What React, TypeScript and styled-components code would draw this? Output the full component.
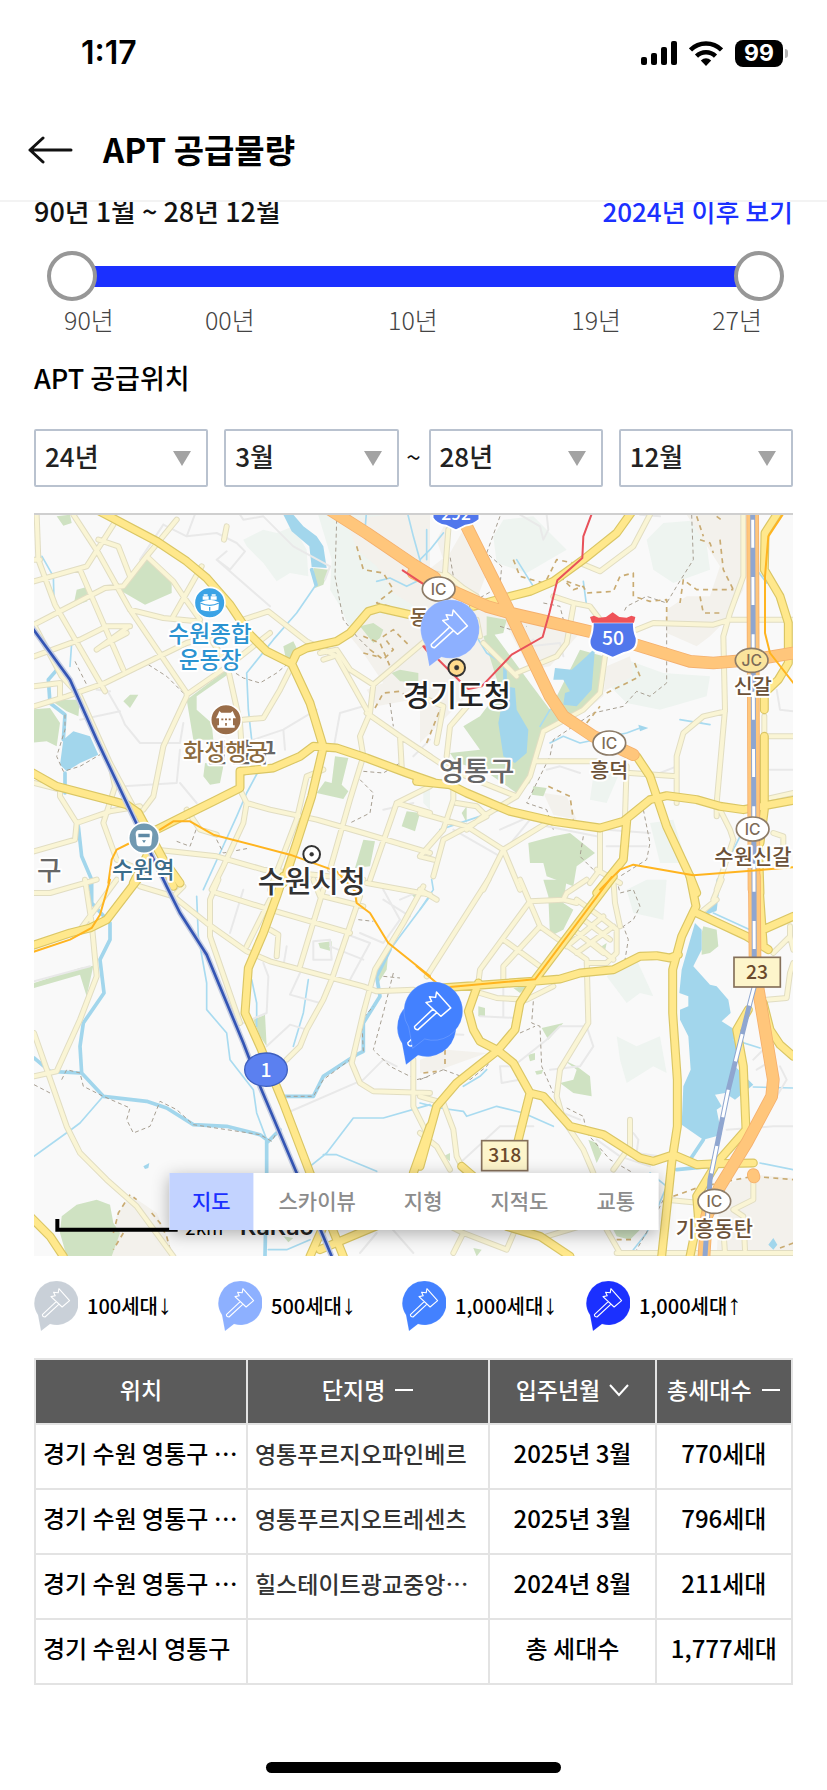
import React, { useState } from "react";
import styled, { createGlobalStyle } from "styled-components";

const GlobalStyle = createGlobalStyle`
  *, *::before, *::after { box-sizing: border-box; }
  body {
    margin: 0;
    background: #fff;
    color: #111;
    font-family: "Noto Sans CJK KR", sans-serif;
  }
  button, select, input { font-family: inherit; }
`;

const BLUE = "#1b30ff";

/* ---------- screen frame ---------- */

const Screen = styled.div`
  min-height: 100vh;
  display: flex;
  flex-direction: column;
  background: #fff;
`;

const StatusBar = styled.div`
  height: 104px;
  display: flex;
  align-items: center;
  justify-content: space-between;
  padding: 2px 38px 0 81px;
`;

const Clock = styled.time`
  font: 600 32px/32px Inter, sans-serif;
  color: #000;
`;

const StatusIcons = styled.div`
  display: flex;
  align-items: center;
  gap: 12px;
`;

const Battery = styled.div`
  position: relative;
  width: 48px;
  height: 27px;
  margin-right: 6px;
  border-radius: 8px;
  background: #000;
  color: #fff;
  text-align: center;
  font: 700 23px/27px Inter, sans-serif;

  &::after {
    content: "";
    position: absolute;
    left: 50px;
    top: 9px;
    width: 3px;
    height: 9px;
    border-radius: 0 4px 4px 0;
    background: #b5b5b5;
  }
`;

const Header = styled.header`
  position: relative;
  z-index: 1;
  height: 98px;
  display: flex;
  align-items: center;
  gap: 30px;
  padding: 0 28px 4px;
  background: #fff;
  border-bottom: 2px solid #f3f3f3;
`;

const BackButton = styled.button`
  display: flex;
  padding: 0;
  border: 0;
  background: none;
  cursor: pointer;
`;

const Title = styled.h1`
  margin: 0;
  padding-bottom: 2px;
  font-size: 33px;
  line-height: 40px;
  font-weight: 700;
  color: #000;
`;

const Body = styled.main`
  flex: 1;
  padding: 0 34px;
`;

const HomeBar = styled.div`
  width: 295px;
  height: 11px;
  margin: 0 auto 17px;
  border-radius: 6px;
  background: #000;
`;

/* ---------- period slider ---------- */

const PeriodRow = styled.div`
  display: flex;
  justify-content: space-between;
  align-items: center;
  margin-top: -11px;
  height: 40px;
  font-size: 27px;
  line-height: 40px;
  font-weight: 500;
`;

const PeriodLink = styled.a`
  color: ${BLUE};
  font-size: 26px;
  text-decoration: none;
`;

const RangeBox = styled.div`
  display: grid;
  align-items: center;
  height: 50px;
  margin: 20px 9px 0 13px;
  background: linear-gradient(${BLUE}, ${BLUE}) center / calc(100% - 50px) 21px no-repeat;
`;

const Range = styled.input`
  grid-area: 1 / 1;
  appearance: none;
  width: 100%;
  height: 50px;
  margin: 0;
  background: none;
  pointer-events: none;

  &::-webkit-slider-thumb {
    appearance: none;
    width: 50px;
    height: 50px;
    border: 4px solid #979797;
    border-radius: 50%;
    background: #fff;
    pointer-events: auto;
  }
`;

const Ticks = styled.div`
  display: grid;
  grid-template-columns: 10fr 13fr 13fr 10fr auto;
  padding: 0 31px 0 30px;
  margin-top: 2px;
  font-size: 25px;
  line-height: 32px;
  font-weight: 300;
  color: #444;
`;

/* ---------- location filters ---------- */

const SectionTitle = styled.h2`
  margin: 25px 0 0;
  font-size: 27px;
  line-height: 36px;
  font-weight: 500;
  color: #000;
`;

const Filters = styled.form`
  display: grid;
  grid-template-columns: 174fr 190fr auto 174fr 190fr;
  margin: 33px 0 26px;
`;

const SelectBox = styled.div<{ $spaced?: boolean }>`
  position: relative;
  margin-left: ${(p) => (p.$spaced ? "16px" : "0")};

  &::after {
    content: "";
    position: absolute;
    right: 17px;
    top: 22px;
    border: 9px solid transparent;
    border-top: 15px solid #a3a3a3;
    border-bottom: 0;
    pointer-events: none;
  }
`;

const Select = styled.select`
  appearance: none;
  width: 100%;
  height: 58px;
  padding: 0 9px 5px;
  border: 2px solid #b9c2cf;
  border-radius: 2px;
  background: #fff;
  color: #222;
  font-size: 26px;
  font-weight: 500;
`;

const Tilde = styled.span`
  width: 30px;
  text-align: center;
  font-size: 26px;
  line-height: 54px;
`;

/* ---------- map ---------- */

const MapFrame = styled.section`
  position: relative;
  overflow: hidden;
  border-top: 2px solid #cfcfcf;
`;

const MapSvg = styled.svg`
  display: block;
  width: 100%;
  height: auto;
`;

const MapTabs = styled.div`
  position: absolute;
  left: 50%;
  bottom: 26px;
  transform: translateX(-50%);
  display: flex;
  gap: 2px;
  background: #fff;
  box-shadow: 0 4px 16px rgba(0, 0, 0, 0.3);
`;

const MapTab = styled.button<{ $active: boolean }>`
  height: 57px;
  padding: 0 23px 3px;
  border: 0;
  white-space: nowrap;
  font-size: 21px;
  font-weight: 500;
  cursor: pointer;
  background: ${(p) => (p.$active ? "#c3d3ff" : "#fff")};
  color: ${(p) => (p.$active ? BLUE : "#8c8c8c")};
`;

/* ---------- legend ---------- */

const Legend = styled.ul`
  display: grid;
  grid-template-columns: repeat(3, 184px) auto;
  list-style: none;
  margin: 25px 0 27px;
  padding: 0;
`;

const LegendItem = styled.li`
  display: flex;
  align-items: center;
  gap: 9px;
  font-size: 20px;
  line-height: 50px;
  font-weight: 500;
  color: #000;
  white-space: nowrap;
`;

const Arrow = styled.span`
  font-family: "Liberation Sans", sans-serif;
  font-size: 28px;
  line-height: 20px;
`;

/* ---------- table ---------- */

const Table = styled.table`
  width: 100%;
  table-layout: fixed;
  border-collapse: collapse;
  color: #000;
  font-size: 23px;
  line-height: 32px;
`;

const Th = styled.th<{ $w: number }>`
  width: ${(p) => p.$w}%;
  height: 65px;
  padding: 0 0 4px;
  border: 2px solid #e3e3e3;
  background: #5b5b5b;
  color: #fff;
  font-weight: 500;
  white-space: nowrap;
`;

const SortButton = styled.button`
  display: inline-flex;
  align-items: center;
  gap: 9px;
  padding: 0;
  border: 0;
  background: none;
  color: inherit;
  font-size: 23px;
  line-height: 32px;
  font-weight: 500;
`;

const Td = styled.td<{ $align?: "left" | "center"; $name?: boolean }>`
  height: 65px;
  padding: 0 7px 6px;
  border: 2px solid #e3e3e3;
  text-align: ${(p) => p.$align ?? "center"};
  color: ${(p) => (p.$name ? "#333" : "#000")};
  font-size: ${(p) => (p.$name ? "23px" : "24px")};
  font-weight: 500;
  white-space: nowrap;
  overflow: hidden;
`;

/* ---------- map data: four tiles, each drawn in its own coordinates ---------- */

interface Tile {
  x: number;
  y: number;
  hills: string;
  urban: string;
  parks: string;
  water: string;
  streams: string;
  rivers: string;
  lanes: string;
  trails: string;
  tracks: string;
  minor: string;
  major: string;
  express: string;
  metro: string;
  red: string;
}

const TILES: Tile[] = [
  {
    x: 0,
    y: 0,
    hills:
      "M640 90L700 60 740 70 790 50 830 120 835 200 780 190 740 215 700 160 650 110ZM860 0L1200 0 1200 300 960 360 930 290 900 240 905 150ZM1180 830L1200 840 1200 900 1180 880Z",
    urban:
      "M950 30L1200 0 1200 560 1040 590 1010 540 1060 520 1000 430 960 380 1010 310 1150 320 1170 300 1090 250 1040 170 980 120Z",
    parks:
      "M80 20L120 15 125 40 100 48ZM350 150L425 205 425 250 345 285 275 245 280 220ZM140 240L170 232 172 275 130 290ZM470 570L590 480 600 490 500 560 500 600 545 640 550 690 490 690ZM0 600L60 595 90 640 80 710 50 695 0 700ZM60 570L150 570 145 620 110 605ZM280 575L300 555 325 555 300 595ZM525 760L580 770 570 820 540 825 520 800ZM915 740L955 745 935 825 955 845 940 868 860 850 885 815 905 820ZM760 410L790 395 800 415 770 460ZM1130 905L1170 910 1155 965 1115 950ZM1000 990L1035 995 1020 1070 975 1075ZM990 350L1030 340 1060 360 1050 385 1030 400ZM1085 490L1110 480 1165 490 1165 520 1110 515ZM850 175L895 180 880 225 855 235Z",
    water:
      "M760 15L790 15 820 50 860 80 880 110 890 175 845 172 838 110 785 65ZM100 690L130 665 180 680 205 735 150 760 110 785 90 765Z",
    streams:
      "M36 140L70 200 72 270M125 400L120 470M855 230L800 310 730 390 650 490 655 600 665 690M682 790L650 850 620 920 570 1030 520 1140M1010 0L1005 60M1130 0L1150 80 1175 170M1190 60L1190 150M1170 210L1130 230 1080 205 1040 215",
    rivers: "M90 470L55 510 60 580 105 615 100 690M105 790L105 850M145 950L155 1040 185 1110 180 1140M845 180L858 225",
    lanes:
      "M400 45L470 80 560 70 620 100 645 125 600 180 560 150 590 125M400 45L330 150M560 150L720 290M470 80L500 0M620 0L640 30 700 20 790 110 900 170 885 210M230 540L270 610 285 645 330 700 450 700 460 640M280 830L440 820 450 720M450 820L500 880M640 700L760 660 860 600M760 660L765 720M910 720L930 610 1000 590M1200 690L1150 740M1060 900L1150 880M1110 1010L1200 1030M200 540L240 545 M150 630 L270 605",
    trails:
      "M920 30L915 200 940 330 980 380 1020 420M355 465L410 500 465 555M600 480L640 505 690 520 740 490 770 465M135 455L170 525M105 615L105 660 80 740 100 785 150 770 210 735M440 995L480 1010 500 955M560 990L580 1030 660 1015M990 810L1030 850 1020 910 960 940M1000 785L1060 790 1110 760M1080 580L1090 650",
    tracks:
      "M980 110L1000 180 1060 190 1090 240 1040 280 1080 290M1020 420L1060 450 1090 420 1060 380 1090 360 1140 410M1000 380L1050 400 1080 470 1110 470M1035 595L1060 550 1110 545 1130 560M1000 430L1040 440",
    minor:
      "M20 15L25 150 75 285 225 545M12 345L225 235 280 230 350 140 440 30M130 15L205 130 300 300 470 550M12 215L170 170 250 45M150 180L280 480M205 90L265 110 300 200M350 140L430 215 460 260 510 330M430 320L515 170M300 300L400 325 500 335M12 440L150 390 230 350 300 350M12 150L30 150M12 590L110 560 225 520 470 400 540 380M12 345L95 500 150 560 240 760 320 910M90 560L90 520 12 530M200 420L290 355M215 410L290 370M470 560L400 710 370 860 340 900M470 555L600 465 720 370M510 340L590 460 630 640 640 790M640 330L715 305 830 395 920 440 1010 600M640 630L700 625 750 540 785 470M870 430L920 420 960 480 1030 525 1190 390M1030 525L1020 610 990 680 1000 740 960 870 900 1080M1010 610L1110 680 1200 740M1110 680L1115 770M910 440L880 450M12 820L90 840 90 860 140 940 240 905 330 890M140 940L135 990 12 1025M240 760L255 830 220 940 260 1050 330 1080M470 900L510 960 560 975M630 840L650 880 720 900 860 930 1000 970 1200 1030M650 880L640 940 580 1070 545 1140M720 1140L800 930 830 800 880 780M1100 880L1200 830M1100 880L1020 1110M380 1020L560 1040 700 1080 1000 1110M1100 880L1200 910M590 50L582 90",
    major:
      "M200 0L380 95 470 155 530 205 600 285 660 375 710 425 785 462 840 580 880 712 845 860 800 1000 760 1120M785 462L800 430 830 415 920 395 960 370 1015 305 1050 295 1170 322M880 712L850 710 810 740 730 775 630 785 630 835 560 870 460 920 330 985M880 712L920 715 1010 745 1130 790 1210 818M0 785L80 830 290 885 325 910 400 1050 450 1120M350 1040L310 1120",
    express: "M900 0L1010 70 1150 165 1215 205",
    metro: "M390 960L430 935 480 935 550 975 780 1035 920 1085 980 1150M235 1120L245 1050 260 1020 300 1000",
    red: "M1118 182L1200 236M1180 410L1200 435",
  },
  {
    x: 1170,
    y: 0,
    hills:
      "M220 80L250 30 340 20 440 120 320 190 230 160ZM680 90L730 40 850 30 870 180 760 220 700 180ZM540 500L620 450 730 490 870 500 860 560 720 600 620 580ZM520 800L620 740 560 880 510 870ZM690 940L760 930 800 1060 720 1060Z",
    urban:
      "M0 200L90 130 130 60 200 190 170 270 260 300 380 350 480 370 390 470 330 480 250 330 200 420 240 500 160 540 0 700ZM90 15L50 90 80 180ZM800 15L975 15 970 240 920 330 870 380 830 410 740 370 740 300 800 260 870 260 900 170ZM500 600L560 540 640 500 630 440 560 470 550 560ZM370 850L440 860 470 930 400 915Z",
    parks:
      "M200 320L260 330 250 370 200 380ZM190 380L220 370 330 520 390 600 480 420 550 440 540 540 490 600 370 660 330 820 290 850 190 780 110 760 90 730 180 720 130 650 180 620 240 540ZM325 1000L400 980 450 970 525 1030 470 1070 460 1130 380 1100 370 1060 330 1060ZM340 830L380 835 370 860 335 855ZM125 910L140 890 140 940Z",
    water:
      "M455 480L500 440 525 415 515 540 470 590 430 585 435 550 450 545 430 510 400 510 405 475ZM255 530L285 535 290 600 325 660 320 730 285 760 250 740 235 640ZM655 645L685 655 660 665ZM830 635L870 645 840 640Z",
    streams:
      "M0 150L30 120 70 70M490 215L500 290 540 320M290 150L340 230M175 390L200 430 260 470M390 600L360 650M390 700L430 680 480 700 620 670 660 655M780 630L870 645M310 840L240 900 60 960M1010 180L1040 220M930 1040L960 980",
    rivers: "M255 475L255 530",
    lanes:
      "M300 15L360 50 370 90 385 60 380 15M660 15L720 20M330 410L420 400 430 440M300 420L340 390M240 960L330 920M380 780L420 770 480 790M560 960L690 970M560 1010L680 1010M380 950L530 980M100 960L240 1040M240 1040L330 930M1070 540L1080 600 1120 605M1050 780L1120 780M720 790L770 770",
    trails:
      "M240 20L200 130 245 170 240 230 170 270 100 200 90 140M815 15L820 150 770 230 740 280 680 260 620 290 610 310M740 350L740 520 690 560 650 545 610 590 520 610 400 690 390 740 320 880 380 900 400 960M670 900L690 1000 680 1050 600 1100M240 350L290 365 320 350M370 280L420 290 430 330M490 980L480 1040 520 1080",
    tracks:
      "M280 150L300 200 370 220M380 210L410 150 460 160M420 200L460 240 490 230 500 250 580 245 600 200 640 190 640 260 690 275 740 270 740 340M780 280L790 210 830 240 900 240 940 240M840 260L850 310 900 310M840 90L870 100 880 130M900 90L910 180 940 240M830 20L850 80M560 550L600 530 660 500 640 450M500 640L540 590M385 830L450 860 460 930M890 20L910 35M20 700L60 600M480 230L440 215",
    minor:
      "M85 60L75 190M75 190L130 235 170 260M0 180L80 200M480 160L540 185 640 110 690 15M400 260L460 280 510 290 540 330M460 290L440 400 410 440 290 490M190 400L240 450 290 500M170 330L180 380M555 440L540 550 490 600 370 665 330 800 290 860 190 920M350 755L540 755M0 720L90 780 290 860M650 360L700 340 880 345 930 330 1120 330M970 15L970 200 930 310 910 380 915 600 890 880 930 960 940 990M915 605L850 620 790 670 770 740 770 880M620 770L615 920M630 790L770 800M1040 680L1120 680M1033 620L1033 680M100 830L100 870 70 960 0 1040M110 880L170 890 200 920 70 990 40 1100M0 910L140 950 250 1020 300 1140M190 920L140 960M380 940L250 1020 190 1140M540 960L540 1080 510 1120M530 1080L600 1120M0 1040L40 1050M890 880L890 920M1060 970L1090 980 1090 1010M940 990L890 1140M0 560L70 590 50 700M150 580L90 650 80 740M1030 870L1120 850",
    major:
      "M640 0L590 70 490 150 400 215 330 245 240 268 160 290M650 740L690 800 740 950 810 1100 830 1150M-10 815L90 825 140 850 270 905 400 935 540 955 610 935 690 870 740 858 830 870 900 890 970 900 1120 872M620 935L610 1050 530 1150M1080 0L1035 70 1033 180 1080 260 1105 340 1105 460 1075 510 1033 550 1033 600M1033 680L1033 900 1020 1000M1015 1000L1020 1150",
    express:
      "M-20 190L110 250 200 290 270 310 400 340 520 368M640 403L810 455 880 460 1000 450 1120 430M130 30L270 310 390 560 430 620 520 680 640 735M998 0L1002 1140",
    metro: "M1090 12L1045 80 1035 200 1035 370 1050 430 1120 520M540 1140L600 1080 640 1065 820 1097 1120 1073",
    red: "M518 5L490 80 487 145 412 212 388 310 368 382 275 435 185 530 145 538 120 515 15 410",
  },
  {
    x: 0,
    y: 1110,
    hills: "",
    urban: "M260 1010L300 945 380 1000 420 1090 420 1130 240 1130Z",
    parks:
      "M95 1010L140 975 200 960 240 975 250 1030 270 1060 245 1130 110 1130 90 1060ZM12 310L150 265 190 258 170 350 150 285 12 325ZM865 190L905 185 905 215 870 205ZM670 420L705 405 710 500 690 470ZM1045 240L1075 220 1070 270 1045 310ZM760 1070L790 1075 775 1088ZM1145 45L1165 45 1160 60Z",
    water: "M340 860L358 850 355 865 345 868Z",
    streams:
      "M215 655L150 730 130 745 12 830M500 50L505 170 530 310 530 390 590 460 600 540 670 630 680 700 710 780M665 300L680 370 680 440M835 300L820 400 790 500M840 860L890 820 970 715 1060 715 1200 675M880 825L920 825 1040 875M715 1110L770 1110 840 1080M1200 50L1110 170 1080 210",
    rivers:
      "M185 0L185 70 240 130 240 180 210 240 222 340 160 430 150 500 155 580 220 650 350 665 410 685 490 735 590 740 690 765 710 780 710 880 705 1130M710 790L750 750M760 650L850 650 880 590 980 525 1000 515M1000 515L1000 430 1050 350 1040 290 1080 210M12 535L60 575 150 580",
    lanes:
      "M12 305L180 260M700 250L715 290 710 400 640 430M780 345L870 370M780 345L810 280M710 500L780 435 830 450M770 700L1000 600 1060 540 1100 560M850 185L900 180 905 240 850 240 850 185M940 160L1020 190 960 300M640 30L600 160M770 200L760 260M1060 30L1110 120 1060 190 990 160M1060 60L1140 110M900 200L1000 240M1110 60L1180 30M990 1120L1040 1060M1080 1040L1150 1120",
    trails:
      "M12 615L60 640M95 600L110 570 150 580 160 620 220 650 300 685 290 720 310 760 360 740 390 665 440 690 490 735 690 765 725 785 745 750M985 120L1030 125M1060 290L1110 295M1090 280L1060 400 1030 510 1080 560 1160 600 1200 590M1000 515L995 420 1030 380M770 650L850 650 880 600 980 525",
    tracks: "M250 1060L265 1000 300 945 320 960M365 1000L390 1030 410 1070 420 1110M280 1060L250 1110",
    minor:
      "M12 40L60 40 200 0M165 0L185 130 200 290 150 420 80 575 12 590M12 460L110 740 150 820 230 900 320 980 430 1130M150 150L260 0M330 20L430 50 530 130 650 215 720 245 1000 320 1040 335 1150 330M430 50L460 20M565 0L540 60 540 170 630 430M560 40L720 90 960 160M720 60L650 200M880 30L810 260M990 50L905 300 880 360 830 450 810 500 770 540M880 50L1000 80M850 0L870 50M720 150L745 165 740 230M1180 20L1120 130 1035 270 1000 400 965 550 990 610 1030 635 1200 640M1150 540L1150 680 1190 760M1010 10L1200 45",
    major:
      "M760 -10L740 50 700 160 655 265 645 400 690 500 760 670 840 880 940 1130M330 -10L230 120 180 145 120 160 0 200M0 1010L60 1070 100 1130M840 1130L880 1040M870 1110L1060 1030M1200 740L1150 880M400 -50L430 20",
    express: "",
    metro: "M240 0L210 105 185 145 120 180 0 220M975 40L980 70 1020 100 1075 190 1200 290",
    red: "",
  },
  {
    x: 1170,
    y: 1110,
    hills:
      "M560 290L650 240 700 350 660 340 620 370ZM590 470L650 500 720 470 740 580 700 560 620 610 600 540ZM620 30L680 0 740 0 730 120 640 100Z",
    urban: "M0 540L80 510 200 520 60 570 0 580ZM900 920L1000 885 1120 895 1120 1130 890 1130Z",
    parks:
      "M370 0L440 0 430 70 460 90 430 150 390 170 385 50ZM845 160L850 140 890 150 895 200 870 220 845 225ZM365 445L430 430 385 480ZM430 540L470 560 510 590 515 650 460 640 420 610 460 600 470 570ZM325 525L345 520 345 540 330 545ZM175 380L195 385 195 410 175 410ZM280 325L330 315 300 340ZM505 780L530 790 545 820 530 850ZM580 1050L660 1050 630 1080 590 1070ZM70 830L90 820 90 845ZM345 575L370 570 365 582 350 585ZM160 1105L185 1110 170 1130ZM545 200L560 190 555 215Z",
    water:
      "M825 130L845 150 845 210 820 260 870 315 890 320 925 360 932 400 905 425 945 450 960 490 945 560 1000 615 945 660 915 640 885 645 905 680 890 690 905 765 850 780 785 735 790 620 812 570 805 470 780 420 780 390 805 380 805 350 778 340 785 270 805 200ZM870 80L895 45 885 95 850 110ZM1045 1095L1060 1075 1072 1095 1060 1110Z",
    streams:
      "M0 670L60 685 130 695 140 710 230 680 310 700 400 740M130 620L180 590 200 570M880 100L990 150M940 480L1020 505M1000 622L1120 625M1020 850L1120 870M690 880L740 920M35 0L40 30 0 90M640 1110L680 1060 740 920",
    rivers: "M895 0L885 90M850 780L810 840M870 860L770 870",
    lanes:
      "M0 460L130 465M240 560L280 560 380 480 420 440 500 440 520 500 480 560 390 570M240 560L245 610 300 600M180 410L290 415M250 320L250 410M120 850L240 740 340 740M640 760L655 780 650 820 860 850M1000 540L1040 500 1060 540 1010 570M430 700L480 720M530 780L600 830 690 860M1070 650L1100 600 1080 560M920 750L1060 740 1120 740",
    trails:
      "M590 0L600 40 640 30 660 80 640 120 610 140 625 180 615 240M340 365L335 430 360 440 365 560 400 640M300 460L345 440M70 570L150 600 200 560 220 530M440 685L490 710 500 760 570 840 640 880M730 960L690 1040 650 1110M0 600L70 570",
    tracks: "M760 950L830 925 920 905 1000 890 1120 900M590 1080L640 1080M10 580L50 575M75 510L75 560M1080 1105L1120 1090",
    minor:
      "M205 0L20 290M300 0L360 140 500 240 505 430 420 570 410 650 430 720 490 810 520 880M500 0L440 40 430 60 330 65 180 270 175 310M470 60L540 110 590 150 590 220 560 250 500 250M580 0L585 70 600 140M430 60L470 70M360 140L250 260 250 300M250 180L360 260M440 200L550 110M470 220L580 140M460 150L550 220M490 120L570 180M520 190L580 240M180 340L230 355 320 360 400 320M890 60L840 100M905 0L880 60M0 650L70 670 100 750 110 830 130 870M0 760L50 800 90 870M630 720L630 800 580 870M740 960L840 970M940 990L1000 960 1000 880M940 990L970 1010 975 1110M910 1050L915 1120M590 1120L830 1120M100 1120L130 1060 260 1110 290 1040M130 1060L90 1040M380 1070L480 1040M1040 360L1100 355 1110 280 1120 250M1060 220L1110 170 1120 210M860 1120L1120 1120M1110 140L1110 170M560 1050L600 1120M0 30L50 60",
    major:
      "M60 325L340 305 420 298 480 280 580 270 660 230 710 228 750 235 775 225M580 -10L345 300 300 370 285 450 230 515 110 610 50 680 0 860M175 310L145 395 160 450 180 485 230 510 280 550 330 640 370 650 450 740 550 765 660 835 700 845 760 825 830 855 890 852 1000 850M330 640L290 800M810 -10L828 80 785 170 758 270 758 400 772 600 772 740 755 850 725 1130M830 100L980 170 1045 210M1030 150L1120 110M1015 -10L1030 200M985 390L950 450 970 560 978 750 890 850 830 950 835 1010 810 1130M1030 370L1050 450 1080 495 1120 530M125 860L160 890M260 1040L360 1070 450 1130",
    express: "M1003 -10L1005 230 1015 330 1060 600 1055 650 980 790 900 920 860 1010 852 1130M1000 885L1002 892",
    metro: "M-10 260L50 310M90 322L345 299 575 -8",
    red: "",
  },
];

const RAIL = "M0 345L120 510 200 690 340 985 410 1130 450 1210 530 1335 640 1600 690 1730 800 1990 905 2240";
const KTX = "M2168 0L2172 1110 2173 1430 2160 1480 2095 1740 2040 2010 2025 2240";

type LineKey = "streams" | "rivers" | "lanes" | "trails" | "tracks" | "minor" | "major" | "express" | "metro" | "red";

const Lines = ({ of, color, width, dash }: { of: LineKey; color: string; width: number; dash?: string }) => (
  <g
    fill="none"
    stroke={color}
    strokeWidth={width}
    strokeDasharray={dash}
    strokeLinecap={dash ? "butt" : "round"}
    strokeLinejoin="round"
  >
    {TILES.map((t) => (
      <path key={`${t.x}-${t.y}`} d={t[of]} transform={`translate(${t.x} ${t.y})`} />
    ))}
  </g>
);

const Areas = ({ of, color }: { of: "hills" | "urban" | "parks" | "water"; color: string }) => (
  <g fill={color}>
    {TILES.map((t) => (
      <path key={`${t.x}-${t.y}`} d={t[of]} transform={`translate(${t.x} ${t.y})`} />
    ))}
  </g>
);

const LABELS: { text: string; x: number; y: number; size: number; color: string }[] = [
  { text: "팔달구", x: 632, y: 756, size: 78, color: "#666" },
  { text: "수원종합", x: 540, y: 398, size: 68, color: "#2b93d1" },
  { text: "운동장", x: 540, y: 476, size: 68, color: "#2b93d1" },
  { text: "화성행궁", x: 586, y: 750, size: 69, color: "#8c6b3f" },
  { text: "수원역", x: 340, y: 1104, size: 68, color: "#3c6d8a" },
  { text: "구", x: 58, y: 1112, size: 80, color: "#666" },
  { text: "수원시청", x: 845, y: 1148, size: 88, color: "#333" },
  { text: "동", x: 1168, y: 345, size: 62, color: "#7a5c3a" },
  { text: "경기도청", x: 1281, y: 588, size: 88, color: "#222" },
  { text: "영통구", x: 1340, y: 814, size: 82, color: "#666" },
  { text: "흥덕", x: 1738, y: 804, size: 62, color: "#6b5138" },
  { text: "신갈", x: 2168, y: 554, size: 62, color: "#6b5138" },
  { text: "수원신갈", x: 2169, y: 1062, size: 63, color: "#6b5138" },
  { text: "기흥동탄", x: 2053, y: 2178, size: 63, color: "#6b5138" },
];

const JUNCTIONS = [
  { text: "IC", x: 1226, y: 238 },
  { text: "IC", x: 1738, y: 700 },
  { text: "JC", x: 2165, y: 452 },
  { text: "IC", x: 2168, y: 958 },
  { text: "IC", x: 2053, y: 2075 },
];

const PinShape = ({ color }: { color: string }) => (
  <>
    <path
      d="M22 0A22 22 0 1 1 16 43L7 50 4 34A22 22 0 0 1 22 0Z"
      fill={color}
      stroke="#fff"
      strokeOpacity="0.3"
      strokeWidth="0.4"
    />
    <path
      d="M24.900 7.700L35.600 19.700 28.100 26 17 15.600 21.200 14.800 19.600 11.300 24.200 11.800ZM22.200 20.600L8.400 33.600Q8.300 36 11 36L25 23.200"
      fill="none"
      stroke="#fff"
      strokeWidth="1.1"
      strokeLinejoin="round"
    />
  </>
);

const RoadMap = () => (
  <MapSvg viewBox="12 16 2277 2222" role="img" aria-label="수원시 영통구 지도" fontFamily='"Noto Sans CJK KR", sans-serif'>
    <rect width="2400" height="2400" fill="#f9f9f9" />
    <Areas of="hills" color="#eef4f0" />
    <Areas of="urban" color="#f3f1ec" />
    <Areas of="parks" color="#cfe2c2" />
    <Areas of="water" color="#a2d6ec" />
    <Lines of="streams" color="#a9dbf0" width={5} />
    <Lines of="rivers" color="#a2d6ec" width={11} />
    <Lines of="lanes" color="#e9e9e9" width={6} />
    <Lines of="trails" color="#a79f92" width={3} dash="12 9" />
    <Lines of="tracks" color="#c9ab72" width={5} dash="15 13" />
    <Lines of="minor" color="#e1ddc2" width={18} />
    <Lines of="minor" color="#faf5d5" width={12} />
    <Lines of="major" color="#dac665" width={27} />
    <Lines of="major" color="#ffe88c" width={20} />
    <Lines of="express" color="#f4b06e" width={38} />
    <Lines of="express" color="#ffc67b" width={33} />
    <g fill="none">
      <path d={RAIL} stroke="#c5cde2" strokeWidth="17" />
      <path d={RAIL} stroke="#3455b4" strokeWidth="8" />
      <path d={KTX} stroke="#8fa6d0" strokeWidth="15" />
      <path d={KTX} stroke="#fff" strokeWidth="9" strokeDasharray="84 88" strokeDashoffset="-30" />
    </g>
    <Lines of="metro" color="#ffb41f" width={6} />
    <Lines of="red" color="#e8515a" width={6} />

    <g textAnchor="middle" stroke="#fff" strokeWidth="12" strokeLinejoin="round" paintOrder="stroke" fontWeight="500">
      {LABELS.map((l) => (
        <text key={l.text} x={l.x} y={l.y} fontSize={l.size} fill={l.color}>
          {l.text}
        </text>
      ))}
    </g>

    {/* stadium */}
    <circle cx="539" cy="279" r="46" fill="#3ba3e6" stroke="#fff" strokeWidth="5" />
    <path
      d="M511 278Q539 262 567 278L565 300Q539 310 513 300ZM518 260H536V270H518ZM542 260H560V270H542ZM521 254h12v4h-12zM545 254h12v4h-12z"
      fill="#fff"
    />
    <path d="M511 280Q539 294 567 280M539 292V303" fill="none" stroke="#3ba3e6" strokeWidth="4" />
    {/* palace */}
    <circle cx="588" cy="630" r="46" fill="#996d49" stroke="#fff" strokeWidth="5" />
    <path d="M568 604L574 609H602L608 604 612 614 618 626H609V647H614V654H562V647H567V626H558L564 614Z" fill="#fff" />
    <path d="M574 629h6M585 629h6M596 629h6M588 640v8" stroke="#996d49" strokeWidth="5" />
    {/* station */}
    <circle cx="342" cy="985" r="46" fill="#7199b1" stroke="#fff" strokeWidth="5" />
    <path d="M328 961H356Q368 961 367 975L364 1003Q363 1010 354 1010H330Q321 1010 320 1003L317 975Q316 961 328 961Z" fill="#fff" />
    <path d="M325 972H359V983H325ZM336 992H348L342 1000Z" fill="#5f8aa5" />

    {/* government offices */}
    <g stroke="#333">
      <circle cx="845" cy="1034" r="25" fill="#fff" strokeWidth="6" />
      <circle cx="845" cy="1034" r="6" fill="#333" />
      <circle cx="1280" cy="474" r="25" fill="#ffdb8d" strokeWidth="6" />
      <circle cx="1280" cy="474" r="7" fill="#333" />
    </g>

    {JUNCTIONS.map((j) => (
      <g key={`${j.x}-${j.y}`}>
        <ellipse
          cx={j.x}
          cy={j.y}
          rx="49"
          ry="36"
          fill={j.text === "JC" ? "#fbe49c" : "#fff"}
          stroke="#8d7c68"
          strokeWidth="5"
        />
        <text
          x={j.x}
          y={j.y + 17}
          textAnchor="middle"
          fontFamily="Inter, sans-serif"
          fontSize="47"
          fontWeight="500"
          fill="#7d6b57"
        >
          {j.text}
        </text>
      </g>
    ))}

    {/* route shields */}
    <g textAnchor="middle" fontWeight="500" fontSize="58">
      <path d="M1208 0H1348V30Q1330 45 1306 48L1278 62 1248 48Q1220 45 1208 25Z" fill="#5177ec" stroke="#fff" strokeWidth="5" />
      <text x="1278" y="30" fill="#fff" fontSize="52">
        292
      </text>
      <path
        d="M1688 338H1812Q1810 362 1820 385Q1824 424 1782 430L1748 445 1714 430Q1674 424 1679 390Q1690 362 1688 338Z"
        fill="#5177ec"
        stroke="#fff"
        strokeWidth="6"
      />
      <path d="M1680 322L1692 318 1706 324 1728 322 1748 308 1768 322 1790 324 1804 318 1816 322 1812 339H1686Z" fill="#ef5359" />
      <text x="1749" y="405" fill="#fff">
        50
      </text>
      <ellipse cx="708" cy="1680" rx="64" ry="50" fill="#5b80f0" stroke="#3e5fbe" strokeWidth="4" />
      <text x="708" y="1701" fill="#fff">
        1
      </text>
      <rect x="2112" y="1343" width="139" height="89" fill="#fdf5cb" stroke="#85705a" strokeWidth="5" />
      <text x="2181" y="1408" fill="#6b4a2c">
        23
      </text>
      <rect x="1355" y="1893" width="138" height="90" fill="#fdf5cb" stroke="#85705a" strokeWidth="5" />
      <text x="1424" y="1958" fill="#6b4a2c">
        318
      </text>
    </g>

    {/* scale and attribution */}
    <path d="M82 2128V2160H443" fill="none" stroke="#000" strokeWidth="12" />
    <text x="466" y="2176" fontSize="56" fill="#000">
      2km
    </text>
    <text x="630" y="2176" fontSize="70" fontWeight="600" fontFamily="Inter, sans-serif" fill="#222">
      KaKao
    </text>

    <g transform="translate(1170 270) scale(4)">
      <PinShape color="#8db0ff" />
    </g>
    <g transform="translate(1100 1465) scale(4)">
      <PinShape color="#4381ff" />
    </g>
    <g transform="translate(1120 1416) scale(4)">
      <PinShape color="#4381ff" />
    </g>
  </MapSvg>
);

/* ---------- content ---------- */

const FILTERS = [
  { label: "시작 연도", value: "24년" },
  { label: "시작 월", value: "3월" },
  { label: "종료 연도", value: "28년" },
  { label: "종료 월", value: "12월" },
];

const MAP_TABS = ["지도", "스카이뷰", "지형", "지적도", "교통"];

const LEGEND = [
  { label: "100세대", arrow: "↓", color: "#c9d0d8" },
  { label: "500세대", arrow: "↓", color: "#8db0ff" },
  { label: "1,000세대", arrow: "↓", color: "#4381ff" },
  { label: "1,000세대", arrow: "↑", color: BLUE },
];

const ROWS = [
  ["경기 수원 영통구 ⋯", "영통푸르지오파인베르", "2025년 3월", "770세대"],
  ["경기 수원 영통구 ⋯", "영통푸르지오트레센츠", "2025년 3월", "796세대"],
  ["경기 수원 영통구 ⋯", "힐스테이트광교중앙⋯", "2024년 8월", "211세대"],
  ["경기 수원시 영통구", "", "총 세대수", "1,777세대"],
];

const FilterSelect = ({ label, value, spaced }: { label: string; value: string; spaced?: boolean }) => (
  <SelectBox $spaced={spaced}>
    <Select aria-label={label} defaultValue={value}>
      <option>{value}</option>
    </Select>
  </SelectBox>
);

const SortMark = ({ down }: { down?: boolean }) => (
  <svg width="20" height="20" viewBox="0 0 20 20" fill="none" stroke="#fff" strokeWidth="2" aria-hidden="true">
    <path d={down ? "M1 6L10 16 19 6" : "M1 11H19"} />
  </svg>
);

export default function App() {
  const [tab, setTab] = useState(MAP_TABS[0]);

  return (
    <Screen>
      <GlobalStyle />
      <StatusBar>
        <Clock>1:17</Clock>
        <StatusIcons>
          <svg width="36" height="25" viewBox="0 0 36 25" aria-hidden="true">
            <rect x="0" y="16" width="6" height="8" rx="2" />
            <rect x="10" y="12" width="6" height="12" rx="2" />
            <rect x="20" y="6" width="6" height="18" rx="2" />
            <rect x="30" y="0" width="6" height="24" rx="2" />
          </svg>
          <svg width="34" height="25" viewBox="0 0 34 25" fill="none" stroke="#000" aria-hidden="true">
            <path d="M1.500 9A22 22 0 0 1 32.500 9" strokeWidth="4.500" />
            <path d="M7.500 15.200A13.500 13.500 0 0 1 26.500 15.200" strokeWidth="4.500" />
            <path d="M17 25L11.800 19.500Q17 15 22.200 19.500Z" fill="#000" stroke="none" />
          </svg>
          <Battery>99</Battery>
        </StatusIcons>
      </StatusBar>

      <Header>
        <BackButton type="button" aria-label="뒤로">
          <svg width="45" height="28" viewBox="0 0 45 28" fill="none" stroke="#111" strokeWidth="3" strokeLinecap="round" strokeLinejoin="round">
            <path d="M43 14H2M15 2L2 14 15 26" />
          </svg>
        </BackButton>
        <Title>APT 공급물량</Title>
      </Header>

      <Body>
        <PeriodRow>
          <span>90년 1월 ~ 28년 12월</span>
          <PeriodLink href="#after-2024">2024년 이후 보기</PeriodLink>
        </PeriodRow>
        <RangeBox>
          <Range type="range" aria-label="시작 시점" min={1990} max={2028} defaultValue={1990} />
          <Range type="range" aria-label="종료 시점" min={1990} max={2028} defaultValue={2028} />
        </RangeBox>
        <Ticks>
          {["90년", "00년", "10년", "19년", "27년"].map((t) => (
            <span key={t}>{t}</span>
          ))}
        </Ticks>

        <SectionTitle>APT 공급위치</SectionTitle>
        <Filters>
          <FilterSelect {...FILTERS[0]} />
          <FilterSelect {...FILTERS[1]} spaced />
          <Tilde>~</Tilde>
          <FilterSelect {...FILTERS[2]} />
          <FilterSelect {...FILTERS[3]} spaced />
        </Filters>

        <MapFrame>
          <RoadMap />
          <MapTabs>
            {MAP_TABS.map((name) => (
              <MapTab key={name} type="button" $active={name === tab} onClick={() => setTab(name)}>
                {name}
              </MapTab>
            ))}
          </MapTabs>
        </MapFrame>

        <Legend>
          {LEGEND.map((item) => (
            <LegendItem key={item.color}>
              <svg width="44" height="50" viewBox="0 0 44 50" aria-hidden="true">
                <PinShape color={item.color} />
              </svg>
              <span>
                {item.label}
                <Arrow>{item.arrow}</Arrow>
              </span>
            </LegendItem>
          ))}
        </Legend>

        <Table>
          <thead>
            <tr>
              <Th $w={28}>위치</Th>
              <Th $w={32}>
                <SortButton type="button">
                  단지명 <SortMark />
                </SortButton>
              </Th>
              <Th $w={22}>
                <SortButton type="button">
                  입주년월 <SortMark down />
                </SortButton>
              </Th>
              <Th $w={18}>
                <SortButton type="button">
                  총세대수 <SortMark />
                </SortButton>
              </Th>
            </tr>
          </thead>
          <tbody>
            {ROWS.map(([place, name, date, count], i) => (
              <tr key={i}>
                <Td $align="left">{place}</Td>
                <Td $align="left" $name>
                  {name}
                </Td>
                <Td>{date}</Td>
                <Td>{count}</Td>
              </tr>
            ))}
          </tbody>
        </Table>
      </Body>
      <HomeBar />
    </Screen>
  );
}
